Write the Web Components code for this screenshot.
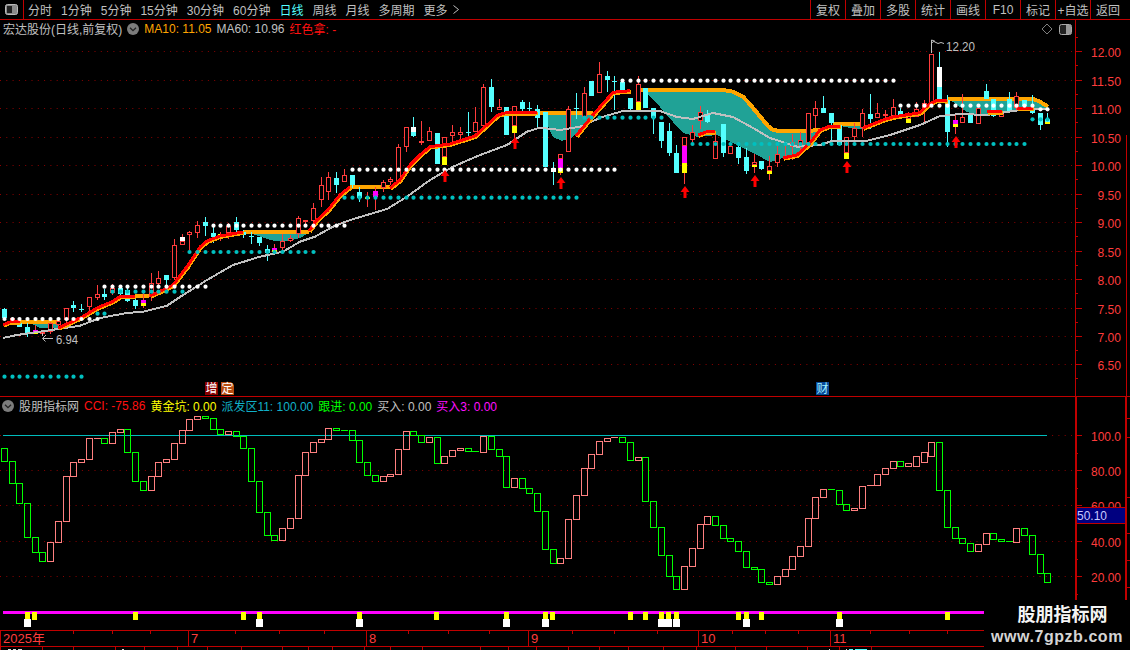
<!doctype html>
<html lang="zh"><head><meta charset="utf-8"><title>K</title>
<style>
html,body{margin:0;padding:0;background:#000;overflow:hidden}
body{width:1130px;height:650px;font:12px "Liberation Sans","Noto Sans CJK SC",sans-serif;color:#c0c0c0}
</style></head>
<body>
<kline-app>
  <top-bar>
    <tab-item>分时</tab-item><tab-item>1分钟</tab-item><tab-item>5分钟</tab-item><tab-item>15分钟</tab-item><tab-item>30分钟</tab-item><tab-item>60分钟</tab-item><tab-item active>日线</tab-item><tab-item>周线</tab-item><tab-item>月线</tab-item><tab-item>多周期</tab-item><tab-item more>更多</tab-item>
    <tool-cell slot="tools">复权</tool-cell><tool-cell slot="tools">叠加</tool-cell><tool-cell slot="tools">多股</tool-cell><tool-cell slot="tools">统计</tool-cell><tool-cell slot="tools">画线</tool-cell><tool-cell slot="tools">F10</tool-cell><tool-cell slot="tools">标记</tool-cell><tool-cell slot="tools">+自选</tool-cell><tool-cell slot="tools">返回</tool-cell>
  </top-bar>
  <chart-pane kind="main">
    <pane-legend slot="legend" tools>
      <legend-item>宏达股份(日线,前复权)</legend-item><round-chevron></round-chevron>
      <legend-item color="#ffa500">MA10: 11.05</legend-item><legend-item>MA60: 10.96</legend-item><legend-item color="#ff1010">红色拿: -</legend-item>
    </pane-legend>
    <main-plot slot="plot"></main-plot>
    <price-axis slot="axis" kind="main"></price-axis>
  </chart-pane>
  <chart-pane kind="sub">
    <pane-legend slot="legend">
      <round-chevron first></round-chevron><legend-item>股朋指标网</legend-item>
      <legend-item color="#ff1010">CCI: -75.86</legend-item><legend-item color="#ffff00">黄金坑: 0.00</legend-item><legend-item color="#10b0c8">派发区11: 100.00</legend-item><legend-item color="#00ff00">跟进: 0.00</legend-item><legend-item>买入: 0.00</legend-item><legend-item color="#ff10ff">买入3: 0.00</legend-item>
    </pane-legend>
    <cci-plot slot="plot"></cci-plot>
    <price-axis slot="axis" kind="sub"></price-axis>
  </chart-pane>
  <signal-strip></signal-strip>
  <date-axis></date-axis>
  <status-stub></status-stub>
  <water-mark><b>股朋指标网</b><span>www.7gpzb.com</span></water-mark>
</kline-app>
<script>
const X=i=>Math.round(3.8+7.73*i);
const RED='#ff3c3c',CY='#54ffff',LINE='#c00000';
function def(name,css,html,init){
  customElements.define(name,class extends HTMLElement{
    connectedCallback(){
      if(this.shadowRoot)return;
      const r=this.attachShadow({mode:'open'});
      r.innerHTML='<style>'+css+'</style>'+(typeof html==='function'?html(this):html);
      if(init)init(this,r);
    }
  });
}
def('kline-app',':host{display:flex;flex-direction:column;width:1130px;height:650px;position:relative;background:#000;overflow:hidden}','<slot></slot>');
def('top-bar',`:host{display:flex;height:19px;border-bottom:1px solid ${LINE};flex:none}
 .ic{width:23px;border-right:1px solid ${LINE};display:flex;align-items:center;justify-content:center;box-sizing:content-box;flex:none}
 .tabs{display:flex;gap:9px;padding-left:4px;flex:1;align-items:center}
 .tools{display:flex;padding-right:5px}`,
 `<div class="ic"><svg width="13" height="11" viewBox="0 0 13 11"><rect x="0.5" y="0.5" width="12" height="10" rx="2" fill="#8a8a8a" stroke="#bbb"/><rect x="2" y="2" width="5" height="7" fill="#222"/></svg></div><div class="tabs"><slot></slot></div><div class="tools"><slot name="tools"></slot></div>`);
def('tab-item',`:host{display:inline-flex;align-items:center;height:19px;color:#c0c0c0;white-space:nowrap;font-size:12px}
 :host([active]){color:#54ffff}svg{margin-left:5px}`,
 el=>`<slot></slot>`+(el.hasAttribute('more')?`<svg width="6" height="9" viewBox="0 0 6 9"><path d="M.5.5l5 4-5 4" fill="none" stroke="#c0c0c0"/></svg>`:''));
def('tool-cell',`:host{display:flex;width:35px;height:19px;align-items:center;justify-content:center;box-sizing:border-box;border-left:1px solid ${LINE};white-space:nowrap;color:#c0c0c0;font-size:12px}`,'<slot></slot>');
def('chart-pane',`:host{display:grid;grid-template-columns:1075px 55px;grid-template-rows:18px auto;flex:none;position:relative}
 :host([kind=main]){height:376px;border-bottom:1px solid ${LINE}}
 :host([kind=sub]){height:203px}
 .l{grid-column:1;grid-row:1}.p{grid-column:1;grid-row:2}.a{grid-column:2;grid-row:1/3}`,
 `<div class="l"><slot name="legend"></slot></div><div class="p"><slot name="plot"></slot></div><div class="a"><slot name="axis"></slot></div>`);
def('pane-legend',`:host{display:flex;align-items:center;gap:5px;height:18px;padding-left:3px;position:relative;white-space:nowrap;font-size:12px}
 .sp{flex:1}svg{flex:none;display:block}`,
 el=>`<slot></slot>`+(el.hasAttribute('tools')?`<span class="sp"></span><svg width="12" height="12" viewBox="0 0 12 12" style="margin-right:1px"><path d="M6 1l5 5-5 5-5-5z" fill="none" stroke="#808080"/></svg><svg width="13" height="11" viewBox="0 0 13 11" style="margin-right:3px"><rect x=".5" y=".5" width="12" height="10" rx="2" fill="#222" stroke="#aaa"/><rect x="7" y="1" width="5" height="9" fill="#999"/></svg>`:''));
def('legend-item',`:host{display:inline-block;color:#c0c0c0;margin-top:-1px}`,'<slot></slot>',(el)=>{const c=el.getAttribute('color');if(c)el.style.color=c;});
def('round-chevron',`:host{display:inline-flex;flex:none}:host([first]){margin-left:-1px}`,
 `<svg width="12" height="12" viewBox="0 0 12 12"><circle cx="6" cy="6" r="6" fill="#7c7c7c"/><path d="M3 4.7l3 3 3-3" fill="none" stroke="#222" stroke-width="1.3"/></svg>`);

/* ---------- main chart data ---------- */
const Z3=y=>210+y/3,Z4=y=>60+y/3,Z5=y=>40+y/3;
const cs=[];
function add(f,rows){for(const r of rows){const[i,k,t,b,wt,wb,seg]=r;cs.push({i,k,t:f(t),b:f(b),wt:f(wt),wb:f(wb),seg:(seg||[]).map(s=>[s[0],f(s[1]),f(s[2])])});}}
add(Z3,[[0,'c',297,325,295,330],[1,'r',325,335,320,336],[2,'c',340,352,335,352],[3,'c',350,370,340,380],
[4,'k',360,372,345,372,[['m',360,366],['y',366,372]]],[5,'r',366,369,362,375],[6,'r',340,365,335,372],[7,'r',333,345,325,350],[8,'r',295,330,293,340],
[9,'c',285,295,273,305],[10,'x',297,298,282,305],[11,'r',262,292,262,305],[12,'r',253,263,225,270],[13,'c',252,262,236,270],[14,'r',233,250,222,255],[15,'c',235,252,225,255],[16,'c',240,272,235,275],[17,'c',270,287,265,297],
[18,'k',270,288,250,295,[['m',270,280],['y',280,288]]],[19,'r',220,260,190,272],[20,'r',205,222,183,225],[21,'c',195,210,195,225],[22,'r',105,205,88,210],[23,'r',93,105,72,105,[['w',82,93]]],[24,'r',67,76,64,120],[25,'r',46,68,33,84],[26,'c',37,48,22,78],[27,'c',69,80,50,100],
[28,'k',72,76,65,92,[['y',72,76]]],[29,'r',47,70,40,88],[30,'c',37,60,22,65],[31,'c',65,75,60,85],[32,'x',77,78,65,102],[33,'c',80,98,80,108],[34,'c',118,128,105,152],
[35,'k',115,125,102,125,[['m',115,120],['y',120,125]]],[36,'r',92,113,72,125],[37,'r',85,93,75,95],[38,'r',25,72,18,85],[39,'r',30,33,30,48],[40,'r',-5,33,-20,35],
[41,'r',-75,-30,-100,-10],[42,'r',-100,-55,-115,-30],[43,'c',-95,-75,-115,-50]]);
add(Z4,[[44,'r',345,365,328,365],[45,'c',345,375,345,385],[46,'c',395,413,380,425],[47,'k',410,417,397,440,[['y',410,417]]],[48,'k',392,410,380,450,[['m',392,410]]],[49,'r',365,385,360,395],[50,'r',358,367,350,375],[51,'r',262,372,252,372],[52,'r',202,262,200,275],
[53,'c',216,228,170,230,[['w',202,216]]],[54,'r',244,250,183,255],[55,'r',213,242,200,242],[56,'c',220,312,220,312],[57,'r',232,292,232,315,[['y',292,315]]],[58,'r',217,227,195,250],[59,'r',217,224,200,240],[60,'x',215,216,155,235],[61,'r',187,215,140,215],[62,'r',82,197,72,197],[63,'c',82,140,57,156],[64,'r',142,149,117,150],[65,'c',142,224,142,224],
[66,'r',139,198,139,255,[['y',198,220]]],[67,'c',127,147,120,160],[68,'x',143,144,127,162],[69,'c',147,173,135,205],[70,'c',155,322,155,322],[71,'c',325,334,305,375,[['w',325,335]]],[72,'r',283,297,283,345,[['m',297,323],['y',323,339]]],[73,'r',148,277,138,277],[74,'x',143,144,98,178],[75,'r',100,172,82,172],[76,'c',63,107,63,107],[77,'r',42,98,5,98],[78,'c',47,60,33,95],[79,'x',62,63,48,150]]);
add(Z5,[[80,'c',125,152,125,160],[81,'c',175,208,175,212],[82,'r',132,185,108,210,[['y',185,210]]],[83,'c',145,205,145,205],[84,'c',205,233,205,282],[85,'c',245,303,245,325],[86,'c',273,340,250,348],[87,'c',338,398,315,398],
[88,'r',292,318,292,432,[['m',318,370],['y',370,398]]],[89,'r',277,300,255,305],[90,'r',217,242,198,268],[91,'c',225,246,210,248],[92,'r',303,356,275,356],[93,'c',252,340,252,352],[94,'r',318,341,318,341],[95,'c',322,353,305,372],[96,'c',352,393,325,402],
[97,'r',365,375,342,400,[['y',375,381]]],[98,'c',362,387,362,390],[99,'r',379,393,348,420,[['y',393,401]]],[100,'r',343,370,318,382],[101,'k',340,345,318,360,[]],[102,'r',305,322,282,360],[103,'r',300,318,275,335],[104,'r',220,310,220,312],[105,'r',205,227,183,265],[106,'c',204,220,168,220],[107,'c',220,250,220,300],[108,'c',255,315,255,318],
[109,'r',292,340,292,356,[['y',340,356]]],[110,'r',265,290,250,305],[111,'r',220,264,208,290],[112,'c',222,237,163,268],[113,'r',220,233,190,235],[114,'r',223,228,210,240],[115,'r',202,228,178,230],[116,'c',213,225,205,232],[117,'r',225,237,215,248,[['y',237,248]]],[118,'r',208,230,185,232],[119,'r',190,210,180,245],[120,'r',42,190,42,190],
[121,'c',140,178,37,178,[['w',82,140]]],[122,'c',180,275,165,322],[123,'k',240,260,225,282,[['m',240,252],['y',252,260]]],[124,'r',232,248,162,250],[125,'c',218,248,218,250],[126,'r',204,253,204,253],[127,'c',153,177,132,177],[128,'c',178,228,178,232],[129,'r',220,230,220,230],[130,'c',178,215,155,218],[131,'r',167,205,155,215],[132,'c',180,198,180,200],[133,'c',205,218,165,222],[134,'c',220,255,220,270],[135,'c',237,248,220,248,[['y',247,252]]]]);

const toP=a=>a.map(p=>p.join(',')).join(' ');
const bands=[
 {top:[[20,322],[58,322]],bot:[[30,323],[40,328],[58,328]]},
 {top:[[135,296],[149,296]],bot:[[135,297],[149,297]]},
 {top:[[243,231.5],[309,231.5]],bot:[[253,234],[270,240],[283,242],[300,238],[309,233]]},
 {top:[[350,186.5],[390,186.5]],bot:[[350,188],[390,188]]},
 {top:[[540,112.5],[593,112.5]],bot:[[543,115],[553,137],[562,141],[573,137],[593,114]]},
 {top:[[640,90],[715,90],[726,90.5],[733,91.7],[738,94],[743,96.7],[748,102],[753,108],[763,120],[768,126],[773,130],[780,131],[810,130.7],[820,130]],bot:[[647,93],[660,107],[673,122],[683,133],[698,137],[717,135],[733,143],[753,153],[770,162],[783,158],[797,155],[810,143],[820,131]]},
 {top:[[833,124],[863,124]],bot:[[840,126],[850,128],[863,129]]},
 {top:[[947,99],[1033,99],[1040,101.7],[1048,106.7]],bot:[[953,102],[967,112],[980,115],[1002,113],[1017,110],[1033,110],[1048,110]]},
];
const redParts=[
 [[3,324.7],[10,322],[20,321.7]],
 [[58,328],[67,324],[82,317],[97,308],[112,301.7],[120,296.7],[135,296]],
 [[150,296],[163,290],[173,285],[187,266.7],[200,247],[207,241],[220,236],[243,232]],
 [[309,231],[317,220],[328,210],[340,195],[350,187]],
 [[390,188],[400,180],[410,165],[420,155],[430,146.7],[450,144],[475,136],[487,125],[498,115],[505,113],[537,112.7]],
 [[576,136],[593,115],[613,92.3],[630,90.7]],
 [[698,135],[706,132],[715,131.7]],
 [[783,158],[797,155],[810,143],[820,130],[830,126],[840,126]],
 [[863,128],[883,120],[893,117],[920,112.7],[928,105],[937,100],[947,101]],
 [[987,111.7],[1002,111.7]],[[1017,108],[1033,108]],
];
const gray=[[3,338],[17,335],[33,332.7],[58,329],[80,325.7],[100,318],[127,313],[143,311.7],[167,305.7],[180,297],[207,280],[233,265],[260,256.7],[283,251.7],[300,241.7],[315,236.7],[333,226.7],[350,220],[387,209],[407,196.7],[430,180],[453,166.7],[480,155],[507,145],[527,131.7],[540,127.7],[560,130],[580,126.7],[603,116.7],[623,111],[660,111],[677,117],[693,119],[713,113],[733,117],[753,128],[770,138],[797,146.7],[820,145],[833,140.7],[867,140.7],[890,135],[920,125],[940,116],[960,114],[987,115],[1020,110],[1048,109]];
const dotRows=[['#fff',0,12,319],['#fff',13,26,286.7],['#fff',27,44,225.7],['#fff',45,79,169.7],['#fff',80,115,80.7],['#fff',116,133,105.7],['#fff',134,135,109.3],
 ['#00c0c0',0,10,376.7],['#00c0c0',12,13,313.7],['#00c0c0',14,23,291.7],['#00c0c0',24,40,252],['#00c0c0',44,74,197.7],['#00c0c0',75,85,117.7],['#00c0c0',89,132,144],['#00c0c0',133,135,119.3]];
const arrows=[[445,170],[515,137],[561,177],[685,186],[755,175],[847,161],[956,136]];
const gridMain=[51.5,80.5,108.5,137.5,165.5,194.5,222.5,251.5,279.5,308.5,336.5,364.5];
const grid=(ys,w)=>ys.map(y=>`<line x1="0" x2="${w}" y1="${y}" y2="${y}" stroke="#8a0000" stroke-dasharray="1 5.3"/>`).join('');
const C={y:'#ffff00',m:'#ff00ff',w:'#ffffff'};
function candle(c){
  const x=X(c.i);let s='';
  const col=(c.k==='c'||c.k==='x')?CY:RED;
  const wt=Math.round(c.wt),wb=Math.round(c.wb),t=Math.round(c.t),b=Math.round(c.b);
  s+=`<rect x="${x}" y="${wt}" width="1" height="${Math.max(wb-wt,1)}" fill="${col}"/>`;
  if(c.k==='c')s+=`<rect x="${x-2}" y="${t}" width="5" height="${Math.max(b-t,1)}" fill="${CY}"/>`;
  if(c.k==='x')s+=`<rect x="${x-2}" y="${t}" width="5" height="1" fill="${CY}"/>`;
  if(c.k==='r')s+=`<rect x="${x-1.5}" y="${t+.5}" width="4" height="${Math.max(b-t-1,1)}" fill="#000" stroke="${RED}"/>`;
  for(const g of c.seg){const a=Math.round(g[1]),d=Math.round(g[2]);s+=`<rect x="${x-2}" y="${a}" width="5" height="${Math.max(d-a,1)}" fill="${C[g[0]]}"/>`;}
  return s;
}
function mainSvg(){
  let s=grid(gridMain,1075);
  for(const b of bands){s+=`<polygon points="${toP(b.top.concat(b.bot.slice().reverse()))}" fill="#20a296" shape-rendering="crispEdges"/>`;}
  for(const b of bands){s+=`<polyline points="${toP(b.top)}" fill="none" stroke="#ffa500" stroke-width="4" shape-rendering="crispEdges"/>`;}
  s+=cs.map(candle).join('');
  s+=`<polyline points="${toP(gray)}" fill="none" stroke="#c0c0c0" stroke-width="2" shape-rendering="crispEdges"/>`;
  for(const p of redParts){
    s+=`<polyline points="${toP(p.map(q=>[q[0]+.8,q[1]+.8]))}" fill="none" stroke="#ffa500" stroke-width="4" shape-rendering="crispEdges"/>`;
    s+=`<polyline points="${toP(p)}" fill="none" stroke="#ff0000" stroke-width="3" shape-rendering="crispEdges"/>`;
  }
  for(const[c,a,b,y]of dotRows)for(let i=a;i<=b;i++)s+=`<circle cx="${X(i)+.5}" cy="${y}" r="2.1" fill="${c}"/>`;
  for(const[x,y]of arrows)s+=`<path d="M${x} ${y}l4.5 6h-3v6h-3v-6h-3z" fill="#ff0000"/>`;
  s+=`<path d="M931.5 53V40M931.5 40l3 1l-3 2M934 41.5l4 2l3-1l3 1" fill="none" stroke="#c0c0c0"/>`;
  s+=`<text x="946" y="50.5" fill="#c0c0c0" font-size="13" textLength="29" lengthAdjust="spacingAndGlyphs">12.20</text>`;
  s+=`<path d="M53 338.5H43M46 335l-3.500 3.500l3 3M42.500 333v3" fill="none" stroke="#c0c0c0"/>`;
  s+=`<text x="56" y="344" fill="#c0c0c0" font-size="13" textLength="22" lengthAdjust="spacingAndGlyphs">6.94</text>`;
  s+=`<rect x="205" y="382" width="13" height="13" fill="#8a0000"/><text x="211.500" y="393" text-anchor="middle" fill="#fff" font-size="12" font-family="Noto Sans CJK SC">增</text>`;
  s+=`<path d="M221 382h10l3 3v10h-13z" fill="#b84c10"/><text x="227.500" y="393" text-anchor="middle" fill="#fff" font-size="12" font-family="Noto Sans CJK SC">定</text>`;
  s+=`<rect x="816" y="382" width="13" height="13" fill="#0a4a9a"/><text x="822.500" y="393" text-anchor="middle" fill="#a0f0ff" font-size="12" font-family="Noto Sans CJK SC">财</text>`;
  return s;
}
def('main-plot',':host{display:block;width:1075px;height:358px}svg{display:block;font-family:"Liberation Sans","Noto Sans CJK SC",sans-serif}',
  `<svg width="1075" height="358" viewBox="0 38 1075 358">${mainSvg()}</svg>`);

/* ---------- sub chart ---------- */
const z9=y=>425+y/3;
const sub=[];
const addZ=(rows)=>rows.forEach(r=>sub.push([z9(r[0]),z9(r[1]),r[2]]));
addZ([[70,109,'G'],[109,176,'G'],[175,236,'G'],[235,338,'G'],[337,383,'G'],[382,410,'G'],[352,410,'P'],[289,353,'P'],[154,290,'P'],[112,155,'P'],[103,113,'P'],[40,104,'P'],[40,41,'P'],[40,56,'G'],[22,56,'P'],[13,23,'P'],[13,83,'G'],[82,170,'G'],[169,197,'G'],[154,197,'P'],[112,155,'P'],[103,113,'P'],[55,104,'P'],[16,56,'P']]);
[[419.3,430.3,'P'],[416.3,419.3,'P'],[416.3,418.3,'G'],[418.3,429.7,'G'],[429.3,434.7,'G'],[431.3,434.3,'P'],[431.3,436.7,'G'],[436.3,448.7,'G'],[448.3,481.7,'G'],[481.3,512.7,'G'],[512.3,535.7,'G'],[535.3,540.7,'G'],[528.3,540.7,'P'],[518.3,528.7,'P'],[475.3,518.7,'P'],[452.3,475.7,'P'],[442.3,452.7,'P'],[439.3,442.7,'P'],[428.3,439.7,'P'],[428.3,430.7,'G'],[430.3,431,'G'],[430.3,440.7,'G'],[440.3,462.7,'G'],
[462.3,475.7,'G'],[475.3,481.7,'G'],[476.3,481.7,'P'],[474.3,476.7,'P'],[449.3,474.7,'P'],[431.3,449.7,'P'],[431.3,435.3,'G'],[435.3,442.7,'G'],[437.3,442.7,'P'],[437.3,463.7,'G'],[456.3,463.7,'P'],[450.3,456.7,'P'],[448.3,450.7,'P'],[448.3,451.7,'G'],[451.3,452.3,'G'],[436.3,452.7,'P'],[436.3,449.7,'G'],[449.3,456.7,'G'],[456.3,487.7,'G'],[478.3,487.7,'P'],[478.3,488.7,'G'],[488.3,493.7,'G'],[493.3,511.7,'G'],[511.3,549.7,'G'],[549.3,563.7,'G'],[558.3,563.7,'P'],[519.3,558.7,'P'],[495.3,519.7,'P'],[468.3,495.7,'P'],[454.3,468.7,'P'],[441.3,454.7,'P'],[438.3,441.7,'P'],[437.3,438.7,'P'],[437.3,442.7,'G'],[442.3,460.7,'G'],[457.3,460.7,'P'],[457.3,501.7,'G'],[501.3,527.7,'G'],[527.3,555.7,'G'],[555.3,576.7,'G'],[576.3,589.7,'G'],[566.3,589.7,'P'],[548.3,566.7,'P'],[524.3,548.7,'P'],[516.3,524.7,'P'],
[516.3,525.7,'G'],[525.3,538.7,'G'],[538.3,541.7,'G'],[541.3,551.3,'G'],[551.3,567.7,'G'],[567.3,569.3,'G'],[569.3,582.7,'G'],[582.7,584.7,'G'],[576.3,584.7,'P'],[569.3,576.7,'P'],[556.3,569.3,'P'],[546.3,556.7,'P'],[518.3,546.7,'P'],[497.3,518.7,'P'],[489.3,497.7,'P'],[489.3,490.3,'G'],[490.3,504.3,'G'],[504.3,510.7,'G'],[508.3,510.7,'P'],[486.3,508.7,'P'],[485.3,486.3,'P'],[474,485.7,'P'],
[468,474,'P'],[461,468,'P'],[461,466,'G'],[463,466,'P'],[456,466,'P'],[452,462,'P'],[442,456,'P'],[442,490.7,'G'],[490.3,527.7,'G'],[527.3,538.7,'G'],[538.3,543.3,'G'],[543.3,551.7,'G'],[544.3,551.7,'P'],[533.3,544.7,'P'],[533.3,539.7,'G'],[539.3,541.7,'G'],[541.3,542.3,'G'],[528.3,542.7,'P'],[528.3,535.7,'G'],[535.3,554.7,'G'],[554.3,573.7,'G'],[573.3,582.7,'G']].forEach(r=>sub.push(r));
function subSvg(){
  let s=grid([435.5,470.5,505.5,541.5,576.5],1075);
  s+=`<rect x="3" y="435" width="1044" height="1" fill="#00bcbc"/>`;
  sub.forEach((r,i)=>{
    const x=X(i),t=Math.floor(r[0]),b=Math.floor(r[1]),c=r[2]==='G'?'#00ff00':'#ff8080';
    const h=b-t;
    s+= h<=1?`<rect x="${x-3}" y="${t}" width="7" height="1" fill="${c}"/>`
      :`<rect x="${x-2.5}" y="${t+.5}" width="6" height="${h}" fill="none" stroke="${c}"/>`;
  });
  return s;
}
def('cci-plot',':host{display:block;width:1075px;height:185px}svg{display:block}',
  `<svg width="1075" height="185" viewBox="0 415 1075 185">${subSvg()}</svg>`);

/* ---------- price axis ---------- */
function label(x,y,t,w,c){return `<text x="${x}" y="${y}" fill="${c||RED}" font-size="13.5" textLength="${w}" lengthAdjust="spacingAndGlyphs">${t}</text>`;}
function tick(y,len){return `<rect x="1075" y="${Math.floor(y)}" width="${len}" height="1" fill="${LINE}"/>`;}
function axisMain(){
  let s=`<rect x="1075" y="20" width="1" height="376" fill="${LINE}"/><rect x="1126" y="135" width="1" height="261" fill="${LINE}"/>`;
  const lb=['12.00','11.50','11.00','10.50','10.00','9.50','9.00','8.50','8.00','7.50','7.00','6.50'];
  gridMain.forEach((y,i)=>{
    s+=tick(y,7);s+=tick(y+14.2,3);if(i===0)s+=tick(y-14.2,3);
    const t=lb[i],w=t.length===5?30:23.5;
    s+=label(1121-w,y+5,t,w);
  });
  return s;
}
function axisSub(){
  let s=`<rect x="1075" y="397" width="2" height="203" fill="${LINE}"/><rect x="1125" y="397" width="2" height="203" fill="${LINE}"/>`;
  [['100.0',435.5],['80.00',470.5],['60.00',505.5],['40.00',541.5],['20.00',576.5]].forEach(([t,y])=>{
    s+=tick(y,7);s+=tick(y+17.7,3);s+=label(1091,y+5,t,30);
  });
  [418,437,497,533,560,587].forEach(y=>{s+=`<rect x="1127" y="${y}" width="3" height="1" fill="${LINE}"/>`;});
  s+=`<rect x="1077" y="507" width="48" height="17" fill="#000080"/><rect x="1077" y="507" width="48" height="1" fill="${LINE}"/><rect x="1077" y="523" width="48" height="1" fill="${LINE}"/>`;
  s+=label(1077,520,'50.10',30,'#c8c8ff');
  return s;
}
def('price-axis',':host{display:block;width:55px;height:100%}svg{display:block;font-family:"Liberation Sans",sans-serif}',
  el=>el.getAttribute('kind')==='main'
   ?`<svg width="55" height="376" viewBox="1075 20 55 376">${axisMain()}</svg>`
   :`<svg width="55" height="203" viewBox="1075 397 55 203">${axisSub()}</svg>`);

/* ---------- strip ---------- */
function stripSvg(){
  let s=`<rect x="3" y="611" width="981" height="3" fill="#ff00ff"/>`;
  [25,32,133,241,257,357,434,504,543,550,628,643,659,666,674,736,744,759,837,945].forEach(x=>s+=`<rect x="${x}" y="612" width="5" height="8" fill="#ffff00"/>`);
  [[24,7],[256,7],[356,7],[503,7],[542,7],[658,14],[673,7],[743,7],[836,7]].forEach(([x,w])=>s+=`<rect x="${x}" y="619" width="${w}" height="8" fill="#fff"/>`);
  return s;
}
def('signal-strip',':host{display:block;height:30px;flex:none}svg{display:block}',
  `<svg width="1130" height="30" viewBox="0 600 1130 30">${stripSvg()}</svg>`);

/* ---------- date axis ---------- */
def('date-axis',`:host{display:flex;height:15px;flex:none;border-top:1px solid ${LINE};position:relative;font-size:13px;color:${RED};line-height:15px;font-family:"Liberation Sans","Noto Sans CJK SC",sans-serif}
 .c{box-sizing:border-box;position:relative;padding-left:2px;white-space:nowrap;border-left:1px solid ${LINE};flex:none}
 .c:first-child{border-left:0;padding-left:3px}
 .t{position:absolute;top:0;width:1px;height:3px;background:${LINE}}`,
 ()=>{
  const cells=[[0,188,'2025年',[72,111,149]],[188,366,'7',[234,278,323]],[366,528,'8',[407,447,488]],[528,698,'9',[571,613,656]],[698,830,'10',[731,764,797]],[830,1130,'11',[869,908,946]]];
  return cells.map(([a,b,t,ts])=>`<div class="c" style="width:${b-a}px">${t}${ts.map(x=>`<i class="t" style="left:${x-a}px"></i>`).join('')}</div>`).join('');
 });

/* ---------- status ---------- */
def('status-stub',`:host{display:flex;height:4px;flex:none;border-top:1px solid ${LINE};overflow:hidden}
 .c{box-sizing:border-box;border-left:1px solid ${LINE};height:4px;flex:none;position:relative}
 .c:first-child{border-left:0}.b{position:absolute;top:2px;height:2px}`,
 ()=>{
  const p=[0,42,73,115,144,177,207,241,282,308,332,364,390,422,480,508,536,568,599,628,663,696,735,766,807,839,871];
  const bits={0:[[7,3,'#ddd'],[12,3,'#ddd'],[17,4,'#ddd']],3:[[6,2,'#ddd']],25:[[6,1,'#ddd'],[9,4,'#54ffff'],[15,12,'#54ffff']],24:[[21,1,'#ddd']]};
  return p.map((x,i)=>`<div class="c" style="width:${(p[i+1]||1130)-x}px">${(bits[i]||[]).map(([l,w,c])=>`<i class="b" style="left:${l}px;width:${w}px;background:${c}"></i>`).join('')}</div>`).join('');
 });

/* ---------- watermark ---------- */
def('water-mark',`:host{position:absolute;left:984px;top:600px;width:146px;height:50px;background:#000;display:flex;flex-direction:column;align-items:center;color:#fff}
 ::slotted(b){font:bold 18px "Noto Sans CJK SC",sans-serif;line-height:26px;height:26px;margin-left:11px;color:#f4f4f4}
 ::slotted(span){font:bold 16px "Liberation Sans",sans-serif;letter-spacing:.55px;line-height:22px;color:#d4d4d4;margin-left:0}`,'<slot></slot>');
</script>
</body></html>
